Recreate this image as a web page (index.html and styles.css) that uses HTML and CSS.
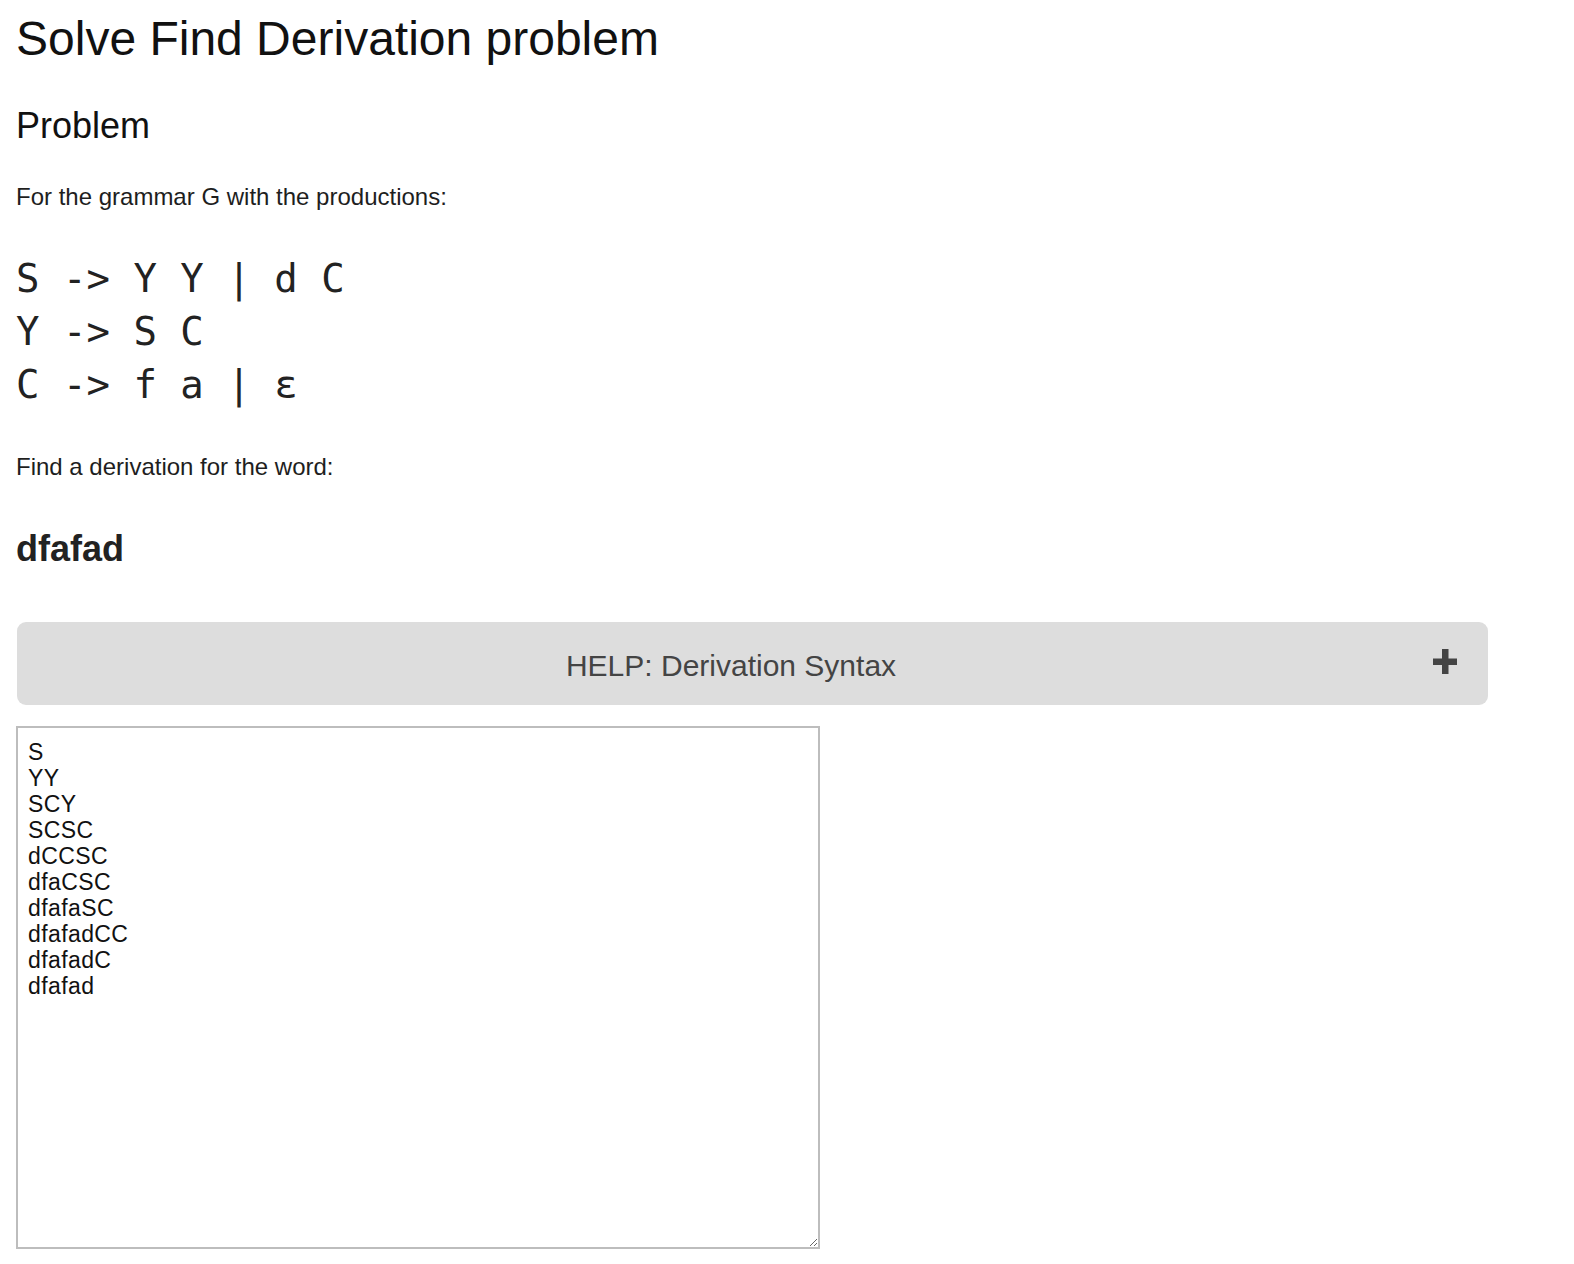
FILE: index.html
```html
<!DOCTYPE html>
<html lang="en">
<head>
<meta charset="utf-8">
<title>Solve Find Derivation problem</title>
<link rel="stylesheet" href="styles.css">
</head>
<body>
<main class="page">
  <h1 class="title">Solve Find Derivation problem</h1>
  <h2 class="section">Problem</h2>
  <p class="text text-intro">For the grammar G with the productions:</p>
  <div class="grammar">
    <div class="rule">S -&gt; Y Y | d C</div>
    <div class="rule">Y -&gt; S C</div>
    <div class="rule">C -&gt; f a | ε</div>
  </div>
  <p class="text text-find">Find a derivation for the word:</p>
  <p class="word">dfafad</p>
  <button class="help" type="button">
    <span class="help-label">HELP: Derivation Syntax</span>
    <svg class="help-plus" width="24" height="25" viewBox="0 0 24 25" aria-hidden="true">
      <rect x="9" y="0" width="6.5" height="25" fill="#444"/>
      <rect x="0" y="9.5" width="24" height="6.5" fill="#444"/>
    </svg>
  </button>
  <textarea class="answer" spellcheck="false">
S
YY
SCY
SCSC
dCCSC
dfaCSC
dfafaSC
dfafadCC
dfafadC
dfafad</textarea>
</main>
</body>
</html>
```

FILE: styles.css
```css
html, body {
  margin: 0;
  padding: 0;
  background: #ffffff;
}

body {
  font-family: "Liberation Sans", Arial, sans-serif;
  color: #1c1c1c;
}

.page {
  padding: 11px 16px 0 16px;
  display: flex;
  flex-direction: column;
  align-items: flex-start;
}

.title {
  margin: 0;
  font-size: 48px;
  line-height: 56px;
  font-weight: normal;
  color: #111;
}

.section {
  margin: 38px 0 0 0;
  font-size: 36px;
  line-height: 42px;
  font-weight: normal;
  color: #111;
}

.text {
  margin: 0;
  font-size: 24px;
  line-height: 28px;
  color: #1e1e1e;
}

.text-intro {
  margin-top: 36px;
}

.grammar {
  margin-top: 41px;
  font-family: "DejaVu Sans Mono", monospace;
  font-size: 39px;
  line-height: 53.2px;
  color: #222;
}

.rule {
  white-space: pre;
  height: 53.2px;
}

.text-find {
  margin-top: 41px;
}

.word {
  margin: 47px 0 0 0;
  font-size: 36px;
  line-height: 42px;
  font-weight: bold;
  color: #222;
}

.help {
  margin: 52px 0 0 1px;
  width: 1471px;
  height: 83px;
  box-sizing: border-box;
  padding: 0 31px 0 37px;
  border: none;
  border-radius: 9px;
  background: #dddddd;
  display: flex;
  align-items: center;
  gap: 25px;
  font-family: "Liberation Sans", Arial, sans-serif;
  cursor: pointer;
}

.help-label {
  flex: 1;
  text-align: center;
  font-size: 30px;
  line-height: 34px;
  color: #444;
  padding-top: 5px;
}

.help-plus {
  flex: none;
  margin-top: -4px;
}

.answer {
  margin: 21px 0 0 0;
  width: 804px;
  height: 523px;
  box-sizing: border-box;
  border: 2px solid #bdbdbd;
  padding: 11px 10px;
  font-family: "Liberation Sans", Arial, sans-serif;
  font-size: 23px;
  letter-spacing: 0.4px;
  line-height: 26px;
  color: #111;
  background: #fff;
  outline: none;
}
```
